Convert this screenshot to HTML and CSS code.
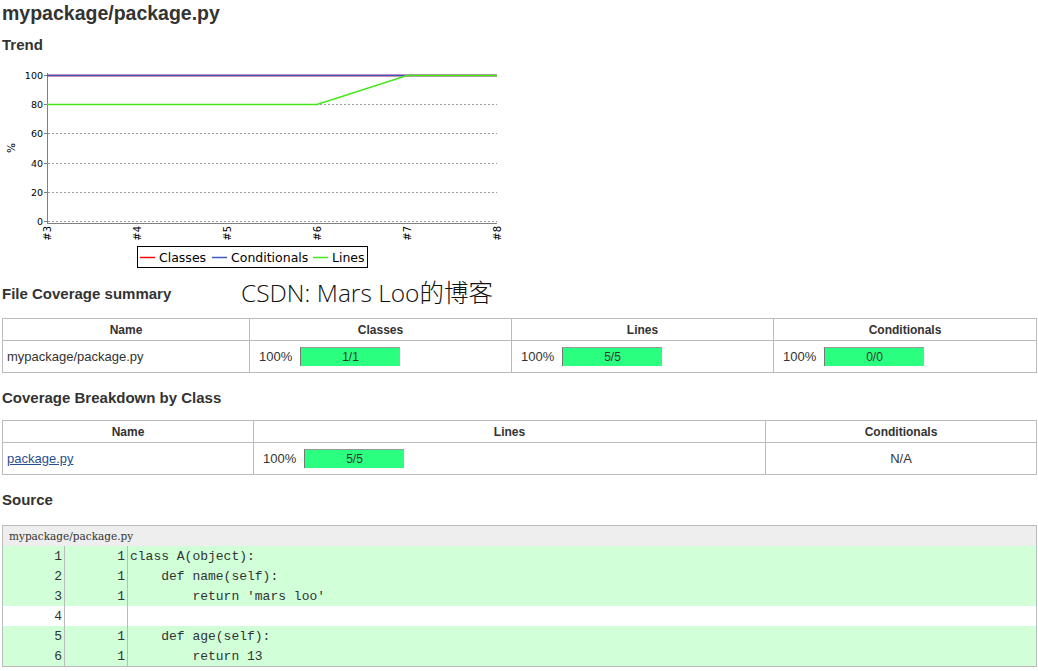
FILE: index.html
```html
<!DOCTYPE html>
<html>
<head>
<meta charset="utf-8">
<title>mypackage/package.py</title>
<link rel="stylesheet" href="styles.css">
</head>
<body>
<h1 class="title">mypackage/package.py</h1>
<h2 class="section trend-head">Trend</h2>
<svg class="chart" width="500" height="210" viewBox="2 60 500 210" xmlns="http://www.w3.org/2000/svg">
  <g class="grid" stroke="#9a9a9a" stroke-width="1" stroke-dasharray="2,2">
    <line x1="48" y1="104.5" x2="497" y2="104.5"/>
    <line x1="48" y1="133.5" x2="497" y2="133.5"/>
    <line x1="48" y1="163.5" x2="497" y2="163.5"/>
    <line x1="48" y1="192.5" x2="497" y2="192.5"/>
    <line x1="48" y1="221.5" x2="497" y2="221.5"/>
  </g>
  <g stroke="#808080" stroke-width="1">
    <line x1="47.5" y1="73" x2="47.5" y2="223"/>
    <line x1="47" y1="223.5" x2="497" y2="223.5"/>
    <line x1="44" y1="75.5" x2="47" y2="75.5"/>
    <line x1="44" y1="104.5" x2="47" y2="104.5"/>
    <line x1="44" y1="133.5" x2="47" y2="133.5"/>
    <line x1="44" y1="163.5" x2="47" y2="163.5"/>
    <line x1="44" y1="192.5" x2="47" y2="192.5"/>
    <line x1="44" y1="221.5" x2="47" y2="221.5"/>
  </g>
  <g class="ylab" font-family="DejaVu Sans, sans-serif" font-size="9.5" fill="#000" text-anchor="end">
    <text x="43" y="78.5">100</text>
    <text x="43" y="107.5">80</text>
    <text x="43" y="136.5">60</text>
    <text x="43" y="166.5">40</text>
    <text x="43" y="195.5">20</text>
    <text x="43" y="224.5">0</text>
  </g>
  <text font-family="DejaVu Sans, sans-serif" font-size="10.5" fill="#000" text-anchor="middle" transform="translate(15,148) rotate(-90)">%</text>
  <g font-family="DejaVu Sans, sans-serif" font-size="10" fill="#000" text-anchor="end">
    <text transform="translate(51,226) rotate(-90)">#3</text>
    <text transform="translate(141,226) rotate(-90)">#4</text>
    <text transform="translate(231,226) rotate(-90)">#5</text>
    <text transform="translate(321,226) rotate(-90)">#6</text>
    <text transform="translate(411,226) rotate(-90)">#7</text>
    <text transform="translate(501,226) rotate(-90)">#8</text>
  </g>
  <line x1="47" y1="75.5" x2="497" y2="75.5" stroke="#e06080" stroke-opacity="0.55" stroke-width="3"/>
  <line x1="47" y1="75.5" x2="497" y2="75.5" stroke="#3d55c0" stroke-width="1.3"/>
  <polyline points="47,104.5 137,104.5 227,104.5 317,104.5 407,75.5 497,75.5" fill="none" stroke="#44e818" stroke-width="1.6"/>
  <rect x="137.5" y="246.5" width="230" height="21" fill="#fff" stroke="#000" stroke-width="1"/>
  <line x1="140" y1="257.5" x2="155" y2="257.5" stroke="#ff0000" stroke-width="1.5"/>
  <line x1="212" y1="257.5" x2="227" y2="257.5" stroke="#3d5fc0" stroke-width="1.5"/>
  <line x1="313" y1="257.5" x2="328" y2="257.5" stroke="#44e818" stroke-width="1.5"/>
  <g font-family="DejaVu Sans, sans-serif" font-size="12.5" fill="#000">
    <text x="159" y="261.5">Classes</text>
    <text x="231" y="261.5">Conditionals</text>
    <text x="332" y="261.5">Lines</text>
  </g>
</svg>

<div class="summary-row">
  <h2 class="section summary-head">File Coverage summary</h2>
  <span class="watermark">CSDN: Mars Loo的博客</span>
</div>

<table class="cov files">
  <thead>
    <tr><th class="c-name1">Name</th><th class="c-q">Classes</th><th class="c-q">Lines</th><th>Conditionals</th></tr>
  </thead>
  <tbody>
    <tr>
      <td class="name">mypackage/package.py</td>
      <td><div class="pg"><span class="pct">100%</span><div class="bar"><span>1/1</span></div></div></td>
      <td><div class="pg"><span class="pct">100%</span><div class="bar"><span>5/5</span></div></div></td>
      <td><div class="pg"><span class="pct">100%</span><div class="bar"><span>0/0</span></div></div></td>
    </tr>
  </tbody>
</table>

<h2 class="section breakdown-head">Coverage Breakdown by Class</h2>

<table class="cov classes">
  <thead>
    <tr><th class="c-name2">Name</th><th class="c-lines">Lines</th><th>Conditionals</th></tr>
  </thead>
  <tbody>
    <tr>
      <td class="name"><a href="#">package.py</a></td>
      <td><div class="pg"><span class="pct">100%</span><div class="bar"><span>5/5</span></div></div></td>
      <td class="na">N/A</td>
    </tr>
  </tbody>
</table>

<h2 class="section source-head">Source</h2>

<table class="source">
  <thead>
    <tr><th colspan="3">mypackage/package.py</th></tr>
  </thead>
  <tbody>
    <tr class="hit"><td class="ln">1</td><td class="hits">1</td><td class="code">class A(object):</td></tr>
    <tr class="hit"><td class="ln">2</td><td class="hits">1</td><td class="code">    def name(self):</td></tr>
    <tr class="hit"><td class="ln">3</td><td class="hits">1</td><td class="code">        return 'mars loo'</td></tr>
    <tr class="blank"><td class="ln">4</td><td class="hits"></td><td class="code"></td></tr>
    <tr class="hit"><td class="ln">5</td><td class="hits">1</td><td class="code">    def age(self):</td></tr>
    <tr class="hit"><td class="ln">6</td><td class="hits">1</td><td class="code">        return 13</td></tr>
  </tbody>
</table>
</body>
</html>
```

FILE: styles.css
```css
html, body {
  margin: 0;
  padding: 0;
  background: #fff;
}
body {
  padding: 0 1px 0 2px;
  font-family: "Liberation Sans", Arial, sans-serif;
  color: #333;
  font-size: 13px;
}
.title {
  margin: 0;
  font-size: 19.5px;
  line-height: 26px;
  font-weight: bold;
}
.section {
  margin: 0;
  font-size: 15px;
  line-height: 18px;
  font-weight: bold;
}
.trend-head {
  margin-top: 10px;
}
.chart {
  display: block;
  margin-top: 6px;
}
.summary-row {
  display: flex;
  align-items: center;
  height: 24px;
  margin-top: 11px;
}
.summary-head {
  width: 239px;
  padding-top: 2px;
}
.watermark {
  font-family: "Open Sans", "Noto Sans CJK SC", sans-serif;
  font-weight: 300;
  font-size: 24.5px;
  color: #111;
  line-height: 24px;
  white-space: nowrap;
}
table.cov {
  width: 1035px;
  border-collapse: collapse;
  margin-top: 13px;
}
table.cov th, table.cov td {
  border: 1px solid #bbb;
  padding: 0 4px;
}
table.cov th {
  height: 21px;
  font-size: 12px;
  font-weight: bold;
  text-align: center;
  color: #333;
}
table.cov td {
  height: 31px;
  font-size: 13px;
}
.c-name1 { width: 238px; }
.c-q { width: 253px; }
.c-name2 { width: 242px; }
.c-lines { width: 503px; }
.pg {
  display: flex;
  align-items: center;
  padding-left: 5px;
}
.pct {
  width: 41px;
}
.bar {
  width: 100px;
  height: 19px;
  box-sizing: border-box;
  background: #2bff80;
  border-left: 1px solid #777;
  border-top: 1px solid #999;
  text-align: center;
  font-size: 12px;
  line-height: 18px;
  color: #333;
}
td.na {
  text-align: center;
}
td.name a {
  color: #2a4d92;
  text-decoration: underline;
}
.breakdown-head {
  margin-top: 16px;
}
table.classes {
  margin-top: 13px;
}
.source-head {
  margin-top: 16px;
}
table.source {
  width: 1035px;
  margin-top: 16px;
  border-collapse: collapse;
  border: 1px solid #bbb;
}
table.source th {
  background: #eee;
  text-align: left;
  font-family: "DejaVu Serif", serif;
  font-weight: normal;
  font-size: 10.5px;
  height: 20px;
  padding: 0 6px;
  color: #333;
}
table.source td {
  height: 20px;
  padding: 0;
  font-family: "Liberation Mono", "Courier New", monospace;
  font-size: 13px;
  color: #333;
}
table.source tr.hit td {
  background: #d0ffd8;
}
table.source tr.blank td {
  background: #fff;
}
td.ln {
  width: 59px;
  text-align: right;
  padding-right: 2px !important;
  border-right: 1px solid #bbb;
}
td.hits {
  width: 60px;
  text-align: right;
  padding-right: 2px !important;
  border-right: 1px solid #bbb;
}
td.code {
  white-space: pre;
  padding-left: 2px !important;
}
```
